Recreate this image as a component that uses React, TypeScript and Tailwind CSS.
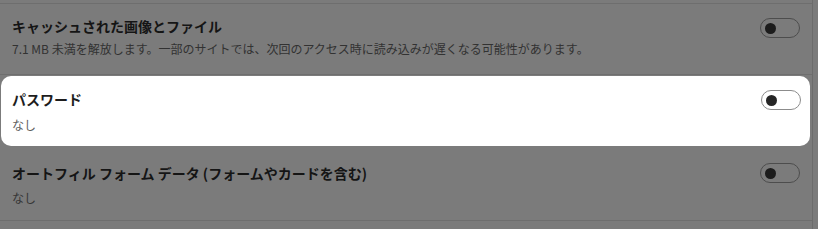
import React from 'react';

const font = { fontFamily: '"Noto Sans CJK JP", "Noto Sans", sans-serif' };

function Toggle({ onWhite, className }: { onWhite?: boolean; className?: string }) {
  return (
    <div
      className={
        'flex h-[20px] w-[40px] shrink-0 items-center rounded-full border pl-[4px] ' +
        (onWhite ? 'border-[#8c8c8c] bg-white ' : 'border-[#4d4d4d] ') +
        (className ?? '')
      }
    >
      <span className={'block h-[11px] w-[11px] rounded-full ' + (onWhite ? 'bg-[#262626]' : 'bg-[#1c1c1c]')} />
    </div>
  );
}

export default function App() {
  return (
    <div className="flex h-[229px] w-[818px] overflow-hidden bg-[#7b7b7b]" style={font}>
      <div className="w-[813px] border-r border-[#6c6c6c] pt-[3px]">
        {/* キャッシュ */}
        <div className="flex h-[72px] justify-between border-t border-b border-[#6e6e6e] pl-3 pr-3 pt-[12px]">
          <div>
            <div className="text-[14px] font-bold leading-[20px] text-[#151515]">キャッシュされた画像とファイル</div>
            <div className="mt-[4px] text-[12px] leading-[18px] text-[#323232]">
              7.1 MB 未満を解放します。一部のサイトでは、次回のアクセス時に読み込みが遅くなる可能性があります。
            </div>
          </div>
          <Toggle className="mt-[2px]" />
        </div>

        {/* パスワード (ハイライト) */}
        <div className="ml-[1px] mt-[1px] flex h-[70px] w-[809px] justify-between rounded-[10px] bg-white pl-[11px] pr-[9px] pt-[13px]">
          <div>
            <div className="text-[14px] font-bold leading-[20px] text-[#1d1d1d]">パスワード</div>
            <div className="mt-[7px] text-[12px] leading-[18px] text-[#5e5e5e]">なし</div>
          </div>
          <Toggle onWhite className="mt-[1px]" />
        </div>

        {/* オートフィル */}
        <div className="flex h-[75px] justify-between border-b border-[#6e6e6e] pl-3 pr-3 pt-[17px]">
          <div>
            <div className="text-[14px] font-bold leading-[20px] text-[#151515]">
              オートフィル フォーム データ (フォームやカードを含む)
            </div>
            <div className="mt-[6px] text-[12px] leading-[18px] text-[#363636]">なし</div>
          </div>
          <Toggle className="mt-[0px]" />
        </div>
      </div>
    </div>
  );
}
